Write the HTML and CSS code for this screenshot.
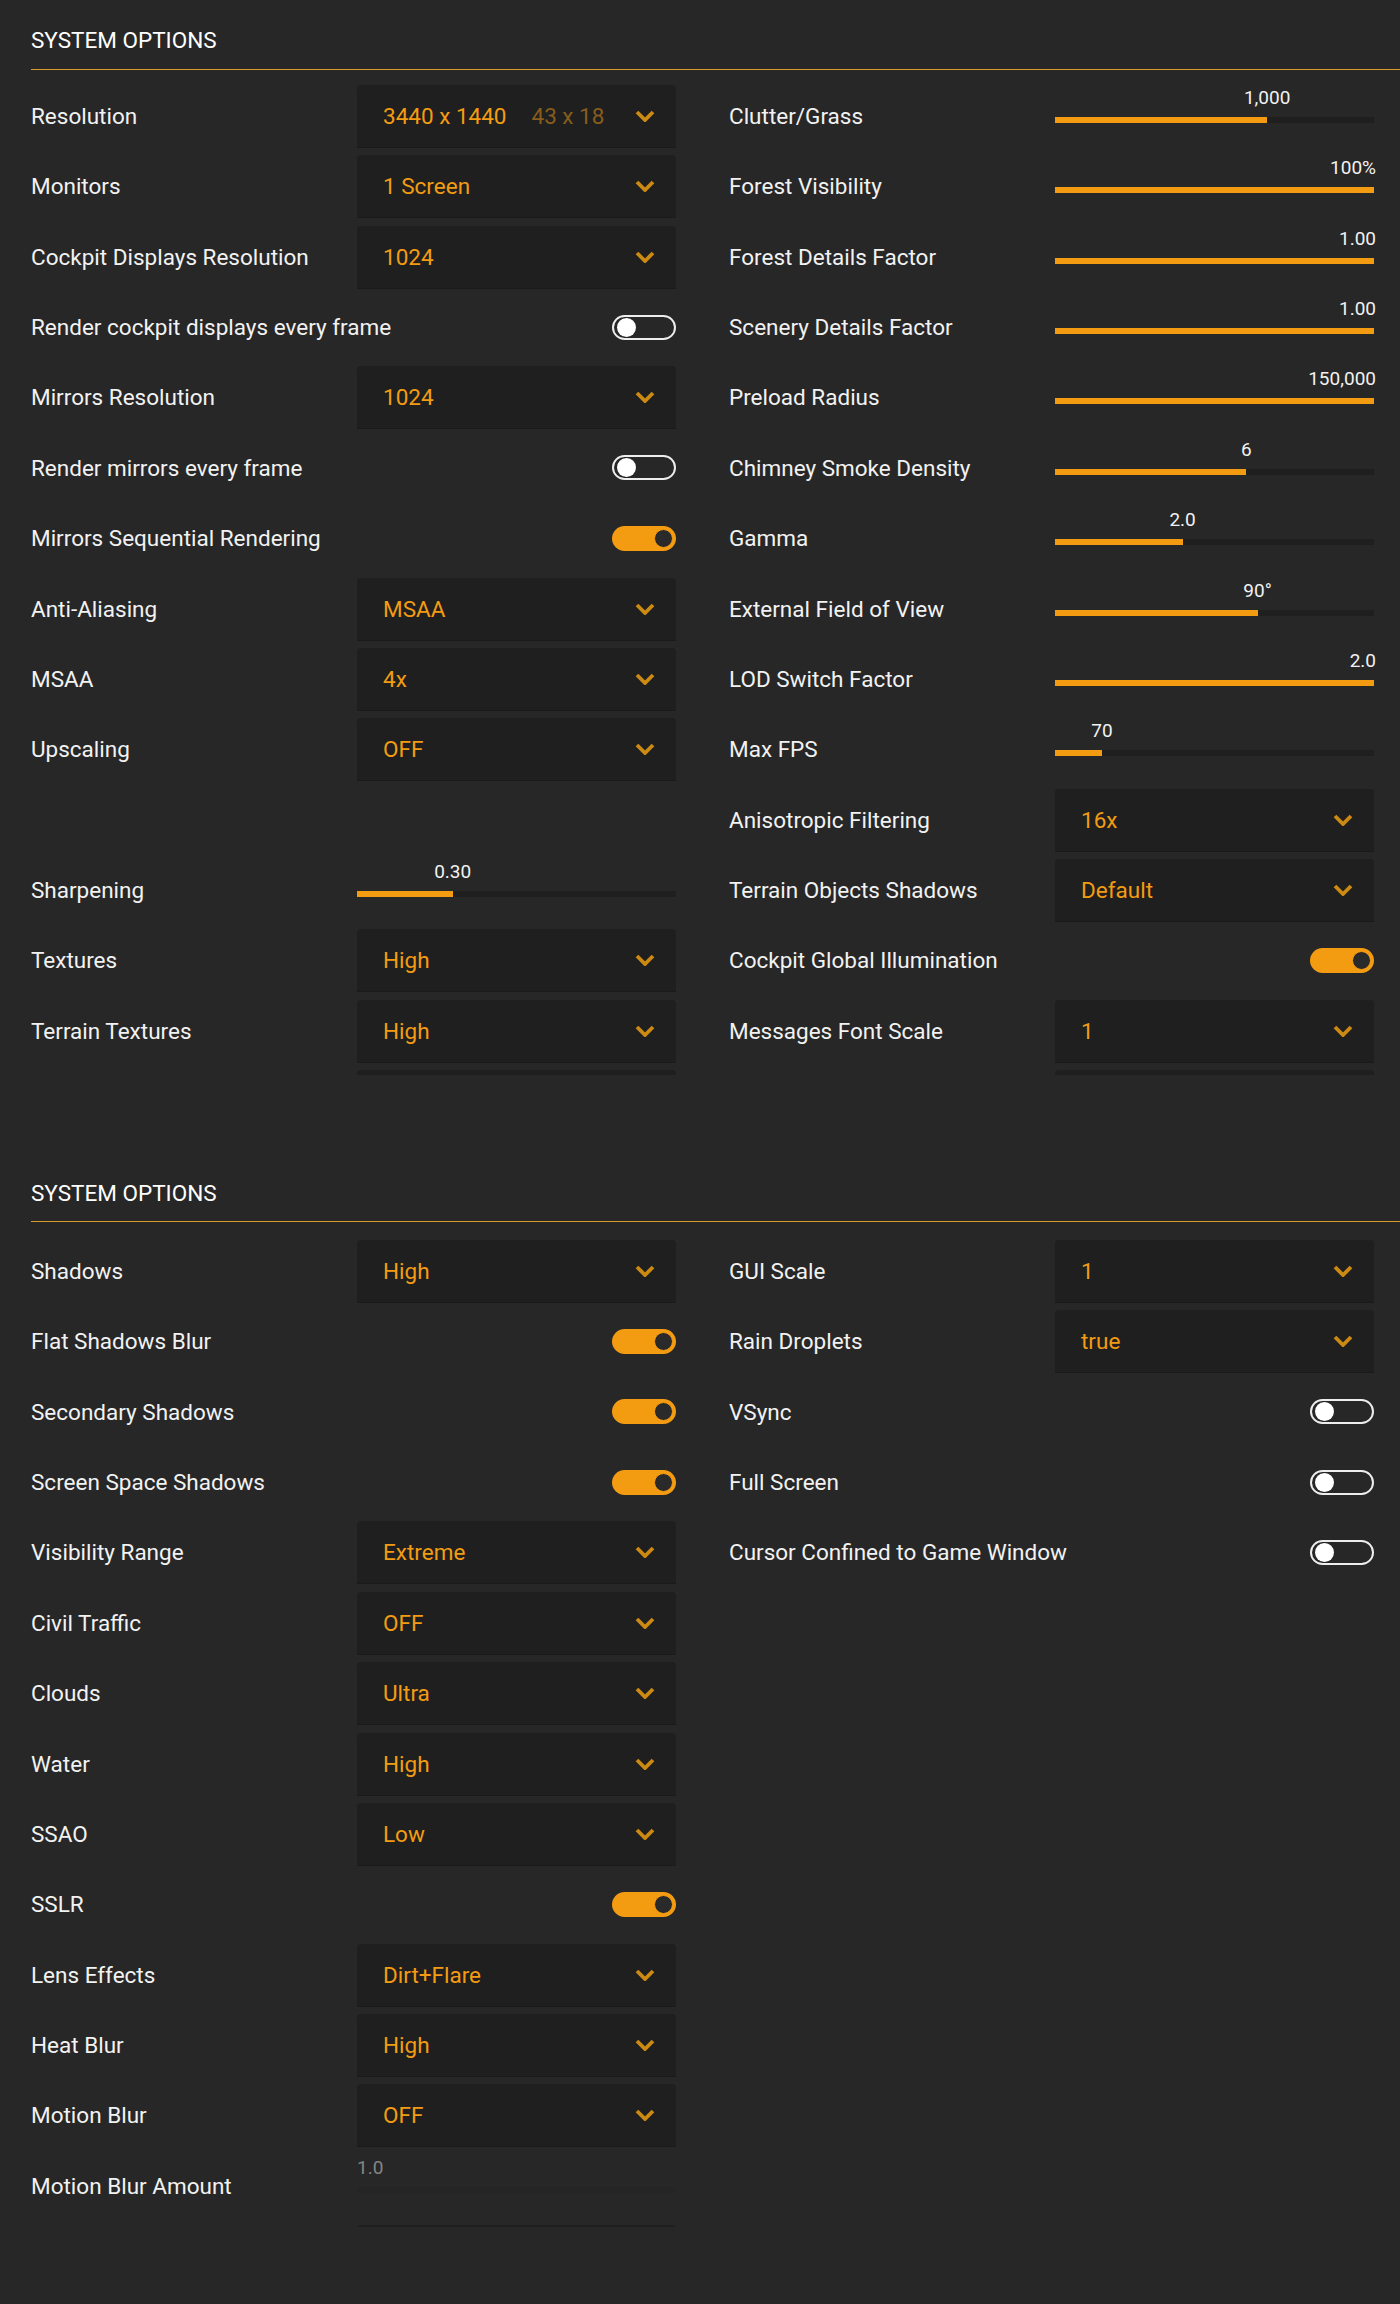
FILE: index.html
```html
<!DOCTYPE html>
<html lang="en">
<head>
    <meta charset="UTF-8">
    <meta name="viewport" content="width=device-width, initial-scale=1.0">
    <title>System Options</title>
    <link rel="stylesheet" href="styles.css">
</head>
<body>

    <svg style="display: none;">
        <symbol id="chevron" viewBox="0 0 20 12">
            <polyline points="2,2 10,10 18,2" fill="none" stroke="currentColor" stroke-width="3.8"></polyline>
        </symbol>
    </svg>

    <!-- first block -->
    <div class="section">
        <div class="section-title">SYSTEM OPTIONS</div>
        <div class="section-rule"></div>
        <div class="options">
            <div class="column">
                <div class="row">
                    <div class="label">Resolution</div>
                    <div class="select"><span class="value">3440 x 1440</span><span class="value-sub">43 x 18</span><svg class="chevron"><use href="#chevron"></use></svg></div>
                </div>
                <div class="row">
                    <div class="label">Monitors</div>
                    <div class="select"><span class="value">1 Screen</span><svg class="chevron"><use href="#chevron"></use></svg></div>
                </div>
                <div class="row">
                    <div class="label">Cockpit Displays Resolution</div>
                    <div class="select"><span class="value">1024</span><svg class="chevron"><use href="#chevron"></use></svg></div>
                </div>
                <div class="row">
                    <div class="label">Render cockpit displays every frame</div>
                    <div class="control"><div class="toggle"></div></div>
                </div>
                <div class="row">
                    <div class="label">Mirrors Resolution</div>
                    <div class="select"><span class="value">1024</span><svg class="chevron"><use href="#chevron"></use></svg></div>
                </div>
                <div class="row">
                    <div class="label">Render mirrors every frame</div>
                    <div class="control"><div class="toggle"></div></div>
                </div>
                <div class="row">
                    <div class="label">Mirrors Sequential Rendering</div>
                    <div class="control"><div class="toggle on"></div></div>
                </div>
                <div class="row">
                    <div class="label">Anti-Aliasing</div>
                    <div class="select"><span class="value">MSAA</span><svg class="chevron"><use href="#chevron"></use></svg></div>
                </div>
                <div class="row">
                    <div class="label">MSAA</div>
                    <div class="select"><span class="value">4x</span><svg class="chevron"><use href="#chevron"></use></svg></div>
                </div>
                <div class="row">
                    <div class="label">Upscaling</div>
                    <div class="select"><span class="value">OFF</span><svg class="chevron"><use href="#chevron"></use></svg></div>
                </div>
                <div class="row"></div>
                <div class="row">
                    <div class="label">Sharpening</div>
                    <div class="slider" style="--v: 30%;">
                        <div class="slider-value">0.30</div>
                        <div class="track"><div class="fill"></div></div>
                    </div>
                </div>
                <div class="row">
                    <div class="label">Textures</div>
                    <div class="select"><span class="value">High</span><svg class="chevron"><use href="#chevron"></use></svg></div>
                </div>
                <div class="row">
                    <div class="label">Terrain Textures</div>
                    <div class="select"><span class="value">High</span><svg class="chevron"><use href="#chevron"></use></svg></div>
                </div>
                <div class="row">
                    <div class="label"></div>
                    <div class="select"></div>
                </div>
            </div>

            <div class="column">
                <div class="row">
                    <div class="label">Clutter/Grass</div>
                    <div class="slider" style="--v: 66.5%;">
                        <div class="slider-value">1,000</div>
                        <div class="track"><div class="fill"></div></div>
                    </div>
                </div>
                <div class="row">
                    <div class="label">Forest Visibility</div>
                    <div class="slider max" style="--v: 100%;">
                        <div class="slider-value">100%</div>
                        <div class="track"><div class="fill"></div></div>
                    </div>
                </div>
                <div class="row">
                    <div class="label">Forest Details Factor</div>
                    <div class="slider max" style="--v: 100%;">
                        <div class="slider-value">1.00</div>
                        <div class="track"><div class="fill"></div></div>
                    </div>
                </div>
                <div class="row">
                    <div class="label">Scenery Details Factor</div>
                    <div class="slider max" style="--v: 100%;">
                        <div class="slider-value">1.00</div>
                        <div class="track"><div class="fill"></div></div>
                    </div>
                </div>
                <div class="row">
                    <div class="label">Preload Radius</div>
                    <div class="slider max" style="--v: 100%;">
                        <div class="slider-value">150,000</div>
                        <div class="track"><div class="fill"></div></div>
                    </div>
                </div>
                <div class="row">
                    <div class="label">Chimney Smoke Density</div>
                    <div class="slider" style="--v: 60%;">
                        <div class="slider-value">6</div>
                        <div class="track"><div class="fill"></div></div>
                    </div>
                </div>
                <div class="row">
                    <div class="label">Gamma</div>
                    <div class="slider" style="--v: 40%;">
                        <div class="slider-value">2.0</div>
                        <div class="track"><div class="fill"></div></div>
                    </div>
                </div>
                <div class="row">
                    <div class="label">External Field of View</div>
                    <div class="slider" style="--v: 63.5%;">
                        <div class="slider-value">90°</div>
                        <div class="track"><div class="fill"></div></div>
                    </div>
                </div>
                <div class="row">
                    <div class="label">LOD Switch Factor</div>
                    <div class="slider max" style="--v: 100%;">
                        <div class="slider-value">2.0</div>
                        <div class="track"><div class="fill"></div></div>
                    </div>
                </div>
                <div class="row">
                    <div class="label">Max FPS</div>
                    <div class="slider" style="--v: 14.7%;">
                        <div class="slider-value">70</div>
                        <div class="track"><div class="fill"></div></div>
                    </div>
                </div>
                <div class="row">
                    <div class="label">Anisotropic Filtering</div>
                    <div class="select"><span class="value">16x</span><svg class="chevron"><use href="#chevron"></use></svg></div>
                </div>
                <div class="row">
                    <div class="label">Terrain Objects Shadows</div>
                    <div class="select"><span class="value">Default</span><svg class="chevron"><use href="#chevron"></use></svg></div>
                </div>
                <div class="row">
                    <div class="label">Cockpit Global Illumination</div>
                    <div class="control"><div class="toggle on"></div></div>
                </div>
                <div class="row">
                    <div class="label">Messages Font Scale</div>
                    <div class="select"><span class="value">1</span><svg class="chevron"><use href="#chevron"></use></svg></div>
                </div>
                <div class="row">
                    <div class="label"></div>
                    <div class="select"></div>
                </div>
            </div>
        </div>
    </div>

    <!-- second block -->
    <div class="section second">
        <div class="section-title">SYSTEM OPTIONS</div>
        <div class="section-rule"></div>
        <div class="options">
            <div class="column">
                <div class="row">
                    <div class="label">Shadows</div>
                    <div class="select"><span class="value">High</span><svg class="chevron"><use href="#chevron"></use></svg></div>
                </div>
                <div class="row">
                    <div class="label">Flat Shadows Blur</div>
                    <div class="control"><div class="toggle on"></div></div>
                </div>
                <div class="row">
                    <div class="label">Secondary Shadows</div>
                    <div class="control"><div class="toggle on"></div></div>
                </div>
                <div class="row">
                    <div class="label">Screen Space Shadows</div>
                    <div class="control"><div class="toggle on"></div></div>
                </div>
                <div class="row">
                    <div class="label">Visibility Range</div>
                    <div class="select"><span class="value">Extreme</span><svg class="chevron"><use href="#chevron"></use></svg></div>
                </div>
                <div class="row">
                    <div class="label">Civil Traffic</div>
                    <div class="select"><span class="value">OFF</span><svg class="chevron"><use href="#chevron"></use></svg></div>
                </div>
                <div class="row">
                    <div class="label">Clouds</div>
                    <div class="select"><span class="value">Ultra</span><svg class="chevron"><use href="#chevron"></use></svg></div>
                </div>
                <div class="row">
                    <div class="label">Water</div>
                    <div class="select"><span class="value">High</span><svg class="chevron"><use href="#chevron"></use></svg></div>
                </div>
                <div class="row">
                    <div class="label">SSAO</div>
                    <div class="select"><span class="value">Low</span><svg class="chevron"><use href="#chevron"></use></svg></div>
                </div>
                <div class="row">
                    <div class="label">SSLR</div>
                    <div class="control"><div class="toggle on"></div></div>
                </div>
                <div class="row">
                    <div class="label">Lens Effects</div>
                    <div class="select"><span class="value">Dirt+Flare</span><svg class="chevron"><use href="#chevron"></use></svg></div>
                </div>
                <div class="row">
                    <div class="label">Heat Blur</div>
                    <div class="select"><span class="value">High</span><svg class="chevron"><use href="#chevron"></use></svg></div>
                </div>
                <div class="row">
                    <div class="label">Motion Blur</div>
                    <div class="select"><span class="value">OFF</span><svg class="chevron"><use href="#chevron"></use></svg></div>
                </div>
                <div class="row">
                    <div class="label">Motion Blur Amount</div>
                    <div class="slider disabled" style="--v: 0%;">
                        <div class="slider-value">1.0</div>
                        <div class="track"><div class="fill"></div></div>
                    </div>
                </div>
                <div class="row">
                    <div class="label"></div>
                    <div class="select"></div>
                </div>
            </div>

            <div class="column">
                <div class="row">
                    <div class="label">GUI Scale</div>
                    <div class="select"><span class="value">1</span><svg class="chevron"><use href="#chevron"></use></svg></div>
                </div>
                <div class="row">
                    <div class="label">Rain Droplets</div>
                    <div class="select"><span class="value">true</span><svg class="chevron"><use href="#chevron"></use></svg></div>
                </div>
                <div class="row">
                    <div class="label">VSync</div>
                    <div class="control"><div class="toggle"></div></div>
                </div>
                <div class="row">
                    <div class="label">Full Screen</div>
                    <div class="control"><div class="toggle"></div></div>
                </div>
                <div class="row">
                    <div class="label">Cursor Confined to Game Window</div>
                    <div class="control"><div class="toggle"></div></div>
                </div>
            </div>
        </div>
    </div>

</body>
</html>
```

FILE: styles.css
```css
body {
    font-family: 'Roboto', 'Liberation Sans', sans-serif;
    margin: 0;
    padding: 0;
    background-color: #272727;
    color: #F2F2F2;
    font-size: 22.5px;
}

.section {
    padding: 27px 0 0 31px;
}

.section.second {
    padding-top: 105px;
}

.section-title {
    font-size: 22.5px;
    line-height: 26px;
    color: #FFFFFF;
}

.section-rule {
    margin-top: 16px;
    height: 1px;
    background-color: #D99A2E; /* orange rule */
}

.section.second .section-rule {
    margin-top: 15px;
}

.options {
    display: flex;
    gap: 53px;
    margin-top: 15px;
    height: 990px;
    overflow: hidden;
}

.section.second .options {
    margin-top: 18px;
    height: 987px;
}

.column {
    width: 645px;
    display: flex;
    flex-direction: column;
    gap: 8.36px;
}

.row {
    display: flex;
    align-items: center;
    height: 62px;
    flex-shrink: 0;
}

.label {
    width: 326px;
    flex-shrink: 0;
    white-space: nowrap;
}

/* dropdowns */
.select {
    width: 319px;
    height: 62px;
    box-sizing: border-box;
    display: flex;
    align-items: center;
    padding: 0 21px 0 26px;
    background-color: #1F1F1F;
    border-radius: 4px 4px 0 0;
    box-shadow: 0 1px 0 #1A1A1A;
    color: #F39C12; /* orange */
}

.select .value-sub {
    margin-left: 25px;
    color: #875C1D;
}

.select .chevron {
    width: 20px;
    height: 12px;
    margin-left: auto;
    color: #CC8A12;
}

/* toggles */
.control {
    width: 319px;
    display: flex;
    justify-content: flex-end;
}

.toggle {
    position: relative;
    width: 64px;
    height: 25px;
    box-sizing: border-box;
    border: 2px solid #EDEDED;
    border-radius: 13px;
}

.toggle::after {
    content: '';
    position: absolute;
    top: 1px;
    left: 3px;
    width: 19px;
    height: 19px;
    border-radius: 50%;
    background-color: #FFFFFF;
}

.toggle.on {
    background-color: #F39C12;
    border-color: #F39C12;
}

.toggle.on::after {
    left: auto;
    right: 1px;
    background-color: #2A2A2A;
    border: 1px solid #F39C12;
    box-sizing: border-box;
    width: 19px;
    height: 19px;
}

/* sliders */
.slider {
    position: relative;
    width: 319px;
    height: 62px;
}

.slider-value {
    position: absolute;
    top: 0;
    left: var(--v);
    transform: translateX(-50%);
    font-size: 19px;
    line-height: 26px;
    color: #F2F2F2;
    white-space: nowrap;
}

.slider.max .slider-value {
    left: auto;
    right: -2px;
    transform: none;
}

.track {
    position: absolute;
    top: 32px;
    left: 0;
    right: 0;
    height: 6px;
    background-color: #1F1F1F;
}

.track .fill {
    height: 100%;
    width: var(--v);
    background-color: #F39C12;
}

.slider.disabled .slider-value {
    left: 0;
    transform: none;
    color: #858585;
}

.slider.disabled .track {
    background-color: #252525;
}
```
